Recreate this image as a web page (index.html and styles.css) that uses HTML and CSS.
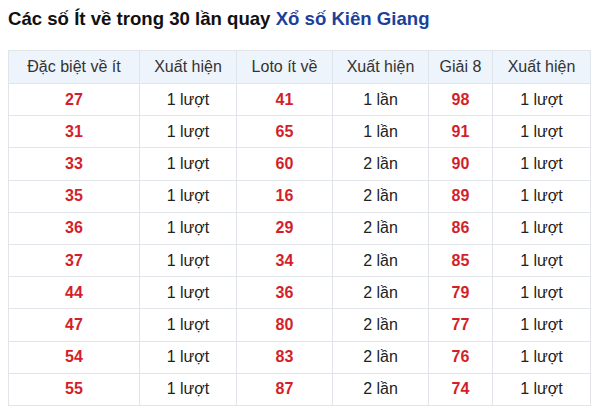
FILE: index.html
```html
<!DOCTYPE html>
<html lang="vi">
<head>
<meta charset="utf-8">
<link rel="stylesheet" href="styles.css">
</head>
<body>
<div class="wrap">
  <h2 class="title">Các số Ít về trong 30 lần quay <span class="hl">Xổ số Kiên Giang</span></h2>
  <table class="stat">
    <colgroup>
      <col class="c1"><col class="c2"><col class="c3"><col class="c4"><col class="c5"><col class="c6">
    </colgroup>
    <thead>
      <tr><th>Đặc biệt về ít</th><th>Xuất hiện</th><th>Loto ít về</th><th>Xuất hiện</th><th>Giải 8</th><th>Xuất hiện</th></tr>
    </thead>
    <tbody>
      <tr><td class="num">27</td><td>1 lượt</td><td class="num">41</td><td>1 lần</td><td class="num">98</td><td>1 lượt</td></tr>
      <tr><td class="num">31</td><td>1 lượt</td><td class="num">65</td><td>1 lần</td><td class="num">91</td><td>1 lượt</td></tr>
      <tr><td class="num">33</td><td>1 lượt</td><td class="num">60</td><td>2 lần</td><td class="num">90</td><td>1 lượt</td></tr>
      <tr><td class="num">35</td><td>1 lượt</td><td class="num">16</td><td>2 lần</td><td class="num">89</td><td>1 lượt</td></tr>
      <tr><td class="num">36</td><td>1 lượt</td><td class="num">29</td><td>2 lần</td><td class="num">86</td><td>1 lượt</td></tr>
      <tr><td class="num">37</td><td>1 lượt</td><td class="num">34</td><td>2 lần</td><td class="num">85</td><td>1 lượt</td></tr>
      <tr><td class="num">44</td><td>1 lượt</td><td class="num">36</td><td>2 lần</td><td class="num">79</td><td>1 lượt</td></tr>
      <tr><td class="num">47</td><td>1 lượt</td><td class="num">80</td><td>2 lần</td><td class="num">77</td><td>1 lượt</td></tr>
      <tr><td class="num">54</td><td>1 lượt</td><td class="num">83</td><td>2 lần</td><td class="num">76</td><td>1 lượt</td></tr>
      <tr><td class="num">55</td><td>1 lượt</td><td class="num">87</td><td>2 lần</td><td class="num">74</td><td>1 lượt</td></tr>
    </tbody>
  </table>
</div>
</body>
</html>
```
FILE: styles.css
```css
html, body {
  margin: 0;
  padding: 0;
  background: #ffffff;
}
body {
  font-family: "Liberation Sans", Arial, sans-serif;
  color: #333333;
}
.wrap {
  padding: 8px 10px 0 8px;
}
.title {
  margin: 0 0 21px 0;
  font-size: 18.6px;
  line-height: 21px;
  font-weight: bold;
  color: #111111;
}
.hl {
  color: #1c3f9c;
}
.stat {
  width: 582px;
  border-collapse: collapse;
  table-layout: fixed;
}
.c1 { width: 131px; }
.c2 { width: 97px; }
.c3 { width: 96px; }
.c4 { width: 96px; }
.c5 { width: 64px; }
.c6 { width: 98px; }
.stat th, .stat td {
  border: 1px solid #e1e5ea;
  text-align: center;
  padding: 0;
  font-size: 16px;
}
.stat th {
  height: 32px;
  background: #eef4fb;
  font-weight: normal;
  color: #333333;
}
.stat td {
  height: 31.2px;
  color: #222222;
}
.stat td.num {
  color: #d41f2a;
  font-weight: bold;
}
```
